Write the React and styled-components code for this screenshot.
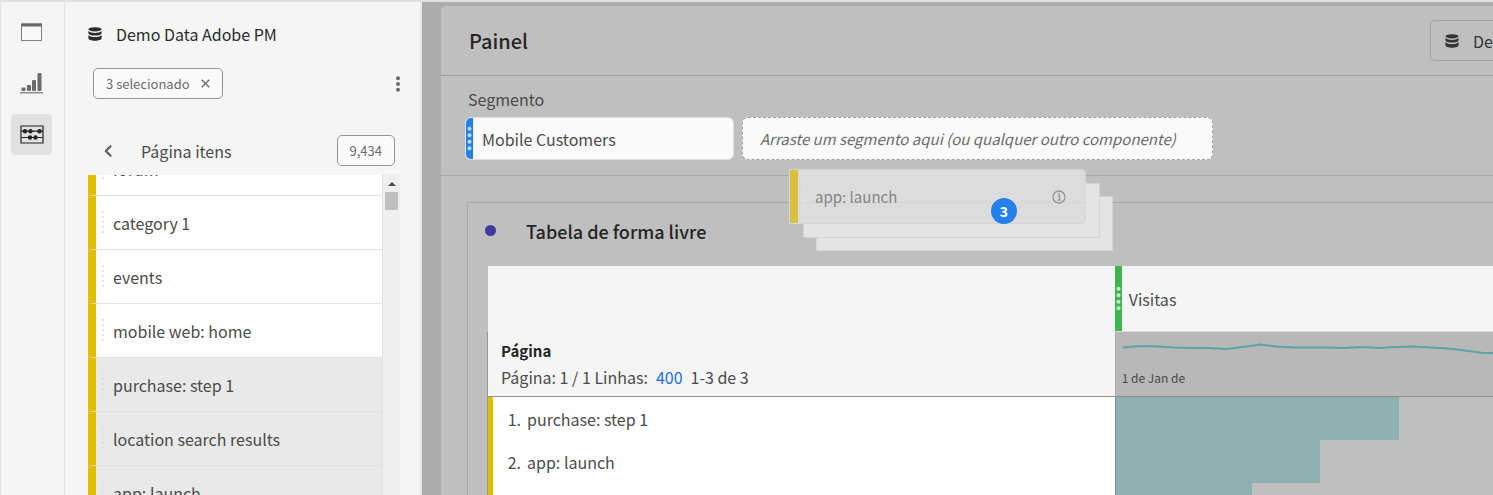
import React from "react";
import styled, { createGlobalStyle } from "styled-components";

const Global = createGlobalStyle`
  *, *::before, *::after { box-sizing: border-box; }
  body { margin: 0; background: #f5f5f5; }
  body, button, input, table {
    font-family: "Noto Sans CJK SC", "Liberation Sans", sans-serif;
    font-size: 16px;
    line-height: 24px;
    color: #4b4b4b;
  }
  button { padding: 0; border: 0; background: none; cursor: pointer; }
  svg { display: block; flex: none; }
`;

const Page = styled.div`
  display: flex;
  height: 100vh;
  overflow: hidden;
  border-top: 2px solid #e0e0e0;
  white-space: nowrap;
`;

const Rail = styled.nav`
  flex: none;
  width: 65px;
  padding: 10px 12px 10px 10px;
  display: flex;
  flex-direction: column;
  gap: 10px;
  border-left: 1px solid #e1e1e1;
  border-right: 1px solid #e1e1e1;
  background: #f5f5f5;
`;

const RailButton = styled.button`
  width: 41px;
  height: 41px;
  display: grid;
  place-items: center;
  border-radius: 4px;
  background: ${(p) => (p.$active ? "#e1e1e1" : "transparent")};
`;

const Sidebar = styled.aside`
  flex: none;
  width: 357px;
  padding: 20px 20px 0 23px;
  display: flex;
  flex-direction: column;
  border-right: 2px solid #e6e6e6;
  background: #f5f5f5;
`;

const Source = styled.div`
  display: flex;
  align-items: center;
  gap: 14px;
  color: #2c2c2c;
`;

const Filters = styled.div`
  display: flex;
  align-items: center;
  justify-content: space-between;
  margin-top: 22px;
  padding-left: 5px;
`;

const Outlined = styled.span`
  height: 31px;
  display: flex;
  align-items: center;
  gap: 11px;
  padding: 0 12px;
  border: 1px solid #959595;
  border-radius: 5px;
  background: #fafafa;
  color: #6b6b6b;
  font-size: 13px;
`;

const MenuButton = styled.button`
  width: 4px;
  height: 24px;
  display: grid;
  place-items: center;
`;

const Crumb = styled.div`
  display: flex;
  align-items: center;
  margin: 36px 5px 9px 14px;
`;

const BackButton = styled.button`
  width: 12px;
  height: 24px;
  display: grid;
  place-items: center;
  margin-right: 27px;
`;

const CrumbTitle = styled.span`
  flex: 1;
`;

const ListBox = styled.div`
  flex: 1;
  min-height: 0;
  display: flex;
  overflow: hidden;
`;

const List = styled.ul`
  flex: 1;
  margin: -33px 0 0;
  padding: 0;
  list-style: none;
  border-right: 1px solid #e1e1e1;
`;

const Item = styled.li`
  height: 54px;
  display: flex;
  align-items: center;
  border-left: 8px solid #e0bf00;
  border-bottom: 1px solid #e1e1e1;
  background: ${(p) => (p.$selected ? "#e9e9e9" : "#ffffff")};
`;

const Grip = styled.span`
  flex: none;
  width: 2px;
  height: 24px;
  margin: 0 9px 0 6px;
  background: repeating-linear-gradient(#e1e1e1 0 2px, transparent 2px 5px);
`;

const Scrollbar = styled.div`
  width: 17px;
  padding-top: 7px;
  display: flex;
  flex-direction: column;
  align-items: center;
  gap: 6px;
  background: #f0f0f0;
`;

const Thumb = styled.div`
  width: 13px;
  height: 18px;
  background: #c0c0c0;
`;

const Canvas = styled.main`
  flex: 1;
  min-width: 0;
  position: relative;
  padding: 4px 0 0 19px;
  background: #acacac;
`;

const Panel = styled.section`
  min-height: 100%;
  border-radius: 5px 0 0 0;
  background: #bfbfbf;
`;

const PanelHeader = styled.header`
  height: 70px;
  display: flex;
  align-items: center;
  justify-content: space-between;
  padding-left: 28px;
  border-bottom: 1px solid #9c9c9c;
`;

const PanelTitle = styled.h1`
  margin: 0;
  font-size: 20px;
  line-height: 28px;
  font-weight: 500;
  color: #252525;
`;

const SourceButton = styled.button`
  width: 63px;
  height: 41px;
  display: flex;
  align-items: center;
  gap: 14px;
  padding-left: 14px;
  border: 1px solid #a3a3a3;
  border-right: 0;
  border-radius: 5px 0 0 5px;
  color: #353535;
`;

const Segments = styled.div`
  height: 100px;
  padding: 11px 24px 0;
  border-bottom: 1px solid #a9a9a9;
`;

const SegmentLabel = styled.div`
  padding-left: 3px;
`;

const SegmentRow = styled.div`
  display: flex;
  gap: 8px;
  margin-top: 6px;
`;

const Segment = styled.div`
  width: 269px;
  height: 43px;
  display: flex;
  align-items: center;
  gap: 9px;
  overflow: hidden;
  border: 1px solid #dedede;
  border-radius: 6px;
  background: #fafafa;
`;

const Handle = styled.span`
  flex: none;
  width: 7px;
  height: ${(p) => p.$height}px;
  display: grid;
  place-items: center;
  background: ${(p) => p.$color};
`;

const DropZone = styled.div`
  width: 471px;
  height: 43px;
  display: flex;
  align-items: center;
  padding-left: 17px;
  border: 1px dashed #a0a0a0;
  border-radius: 6px;
  background: #fafafa;
  color: #6b6b6b;
  font-size: 15px;
  font-style: italic;
`;

const Freeform = styled.section`
  margin: 26px 0 0 26px;
  padding-left: 19px;
  border: 1px solid #a9a9a9;
  border-width: 1px 0 0 1px;
`;

const FreeformHeader = styled.div`
  height: 63px;
  display: flex;
  align-items: center;
  gap: 30px;
  padding-bottom: 8px;
`;

const Dot = styled.span`
  width: 11px;
  height: 11px;
  margin-left: -2px;
  border-radius: 50%;
  background: #3f3a9f;
`;

const FreeformTitle = styled.h2`
  margin: 0;
  font-size: 18px;
  line-height: 28px;
  font-weight: 500;
  color: #252525;
`;

const Table = styled.table`
  width: 100%;
  table-layout: fixed;
  border-collapse: separate;
  border-spacing: 0;
  th, td { padding: 0; text-align: left; font-weight: 400; vertical-align: top; }
`;

const NameColumn = styled.col`
  width: 62.4%;
`;

const EmptyCell = styled.td`
  height: 66px;
  border-left: 1px solid #bfbfbf;
  background: #f5f5f5;
`;

const MetricCell = styled.th`
  height: 66px;
  border-bottom: 1px solid #dddddd;
  background: #f5f5f5;
`;

const MetricContent = styled.div`
  display: flex;
  align-items: center;
  gap: 7px;
`;

const DimensionCell = styled.th`
  && { padding: 7px 0 0 13px; }
  height: 65px;
  border-left: 1px solid #999999;
  border-bottom: 1px solid #8f8f8f;
  background: #f5f5f5;
`;

const Dimension = styled.div`
  font-weight: 700;
  font-size: 15px;
  color: #252525;
`;

const Paging = styled.div`
  display: flex;
  gap: 8px;
  margin-top: 2px;
`;

const RowsLink = styled.a`
  color: #1a6fd8;
  text-decoration: none;
`;

const TrendCell = styled.td`
  height: 65px;
  overflow: hidden;
  border-left: 1px solid #a9a9a9;
  border-bottom: 1px solid #8f8f8f;
  background: #b8b8b8;
`;

const TrendLabel = styled.div`
  padding: 12px 0 0 6px;
  font-size: 12px;
  line-height: 20px;
`;

const RowName = styled.th`
  height: 43px;
  border-left: 1px solid #999999;
  background: #ffffff;
`;

const RowContent = styled.div`
  height: 43px;
  display: flex;
  align-items: center;
  gap: 6px;
  border-left: 5px solid #e0bf00;
`;

const RowNumber = styled.span`
  width: 28px;
  text-align: right;
`;

const BarCell = styled.td`
  height: 43px;
  border-left: 1px solid #808e8e;
`;

const Bar = styled.div`
  height: 43px;
  background: #8eb0b0;
`;

const Drag = styled.div`
  position: absolute;
  left: 368px;
  top: 168px;
  width: 323px;
  height: 82px;
`;

const Sheet = styled.div`
  position: absolute;
  left: ${(p) => p.$step * 13}px;
  top: ${(p) => p.$step * 13}px;
  width: 297px;
  height: 55px;
  border: 1px solid #d3d3d3;
  background: #e4e4e4;
`;

const DragCard = styled.div`
  position: absolute;
  inset: 0 auto auto 0;
  width: 295px;
  height: 53px;
  display: flex;
  align-items: center;
  padding-right: 19px;
  border-left: 8px solid #d8c03c;
  border-radius: 0 4px 4px 0;
  background: linear-gradient(transparent 5px, #d5d5d5 5px 6px, transparent 6px 32px, #d5d5d5 32px 33px, transparent 33px) #dcdcdc;
  box-shadow: 0 0 0 1px #d5d5d5;
  color: #858585;
  font-size: 15px;
`;

const DragName = styled.span`
  flex: 1;
`;

const Count = styled.span`
  position: absolute;
  left: 201px;
  top: 28px;
  width: 26px;
  height: 26px;
  border-radius: 50%;
  background: #2680eb;
  color: #ffffff;
  font-size: 14px;
  line-height: 26px;
  font-weight: 700;
  text-align: center;
`;

function DatabaseIcon() {
  return (
    <svg width="14" height="14" viewBox="0 0 14 14" fill="currentColor" aria-hidden="true">
      <ellipse cx="7" cy="2.3" rx="6.6" ry="2.1" />
      <path d="M.4 4.1C2 5.6 4.5 5.9 7 5.9s5-.3 6.6-1.8v2.1c0 1.4-3 2.3-6.6 2.3S.4 7.6.4 6.2z" />
      <path d="M.4 8.3C2 9.7 4.5 10 7 10s5-.3 6.6-1.7v3c0 1.5-3 2.5-6.6 2.5S.4 12.8.4 11.3z" />
    </svg>
  );
}

function WindowIcon() {
  return (
    <svg width="23" height="19" viewBox="0 0 23 19" aria-hidden="true">
      <rect x="1.5" y="1" width="20" height="16.5" fill="#f8f8f8" stroke="#808080" />
      <path d="M1 .5h21v3H1z" fill="#6b6b6b" />
    </svg>
  );
}

function ChartIcon() {
  return (
    <svg width="23" height="21" viewBox="0 0 23 21" fill="#6b6b6b" aria-hidden="true">
      <path d="M0 19h23v1.5H0z" fill="#8c8c8c" />
      <rect x="1.5" y="14.5" width="4" height="3.5" rx="1" />
      <rect x="7" y="12" width="4" height="6" rx="1" />
      <rect x="12" y="7" width="4" height="11" rx="1" />
      <rect x="17.5" y="0" width="4" height="18" rx="1" />
    </svg>
  );
}

function AbacusIcon() {
  return (
    <svg width="24" height="19" viewBox="0 0 24 19" fill="#252525" aria-hidden="true">
      <path d="M1 1h22v17H1zM1 6.2h22M1 12.5h22" fill="none" stroke="#252525" strokeWidth="1.2" />
      <circle cx="5" cy="6.2" r="2.2" />
      <circle cx="10.5" cy="6.2" r="2.2" />
      <circle cx="19.5" cy="6.2" r="2.2" />
      <circle cx="10" cy="12.5" r="2.2" />
      <circle cx="15.5" cy="12.5" r="2.2" />
    </svg>
  );
}

function CloseIcon() {
  return (
    <svg width="9" height="9" viewBox="0 0 9 9" aria-hidden="true">
      <path d="M.7.7l7.6 7.6M8.3.7L.7 8.3" stroke="#6b6b6b" strokeWidth="1.4" />
    </svg>
  );
}

function MoreIcon() {
  return (
    <svg width="4" height="16" viewBox="0 0 4 16" fill="#6b6b6b" aria-hidden="true">
      <circle cx="2" cy="2.2" r="2" />
      <circle cx="2" cy="8" r="2" />
      <circle cx="2" cy="13.8" r="2" />
    </svg>
  );
}

function ChevronLeft() {
  return (
    <svg width="8" height="12" viewBox="0 0 8 12" aria-hidden="true">
      <path d="M6.5 1.2L1.8 6l4.7 4.8" fill="none" stroke="#5e5e5e" strokeWidth="2.2" strokeLinecap="round" strokeLinejoin="round" />
    </svg>
  );
}

function HandleDots() {
  return (
    <svg width="5" height="25" viewBox="0 0 5 25" fill="#ffffff" fillOpacity=".7" aria-hidden="true">
      <circle cx="2.5" cy="2.8" r="2" />
      <circle cx="2.5" cy="9.3" r="2" />
      <circle cx="2.5" cy="15.7" r="2" />
      <circle cx="2.5" cy="22.2" r="2" />
    </svg>
  );
}

function InfoIcon() {
  return (
    <svg width="14" height="14" viewBox="0 0 14 14" aria-hidden="true">
      <circle cx="7" cy="7" r="6" fill="none" stroke="#949494" strokeWidth="1.3" />
      <circle cx="7" cy="4" r="1" fill="#949494" />
      <path d="M5.5 6.2h2v4M5.3 10.2h3.6" fill="none" stroke="#949494" strokeWidth="1.3" />
    </svg>
  );
}

function TrendLine() {
  return (
    <svg width="380" height="24" viewBox="0 0 380 24" aria-hidden="true">
      <path
        d="M7 15.5L24 14l18 .5 16 1 16 .5h18l18 1 17-2 17-2.5 17 2 17 1h34l16 .5 18-1 17 1 17-1 17-.5 17 1 18 1 17 2 18 2.5h20"
        fill="none"
        stroke="#5aa3a8"
        strokeWidth="2"
      />
    </svg>
  );
}

const items = [
  { name: "forum" },
  { name: "category 1" },
  { name: "events" },
  { name: "mobile web: home" },
  { name: "purchase: step 1", selected: true },
  { name: "location search results", selected: true },
  { name: "app: launch", selected: true },
];

const rows = [
  { number: "1.", name: "purchase: step 1", share: 75.2 },
  { number: "2.", name: "app: launch", share: 54.2 },
  { number: "", name: "", share: 36 },
];

export default function App() {
  return (
    <>
      <Global />
      <Page>
        <Rail>
          <RailButton type="button"><WindowIcon /></RailButton>
          <RailButton type="button"><ChartIcon /></RailButton>
          <RailButton type="button" $active><AbacusIcon /></RailButton>
        </Rail>

        <Sidebar>
          <Source><DatabaseIcon />Demo Data Adobe PM</Source>
          <Filters>
            <Outlined as="button" type="button">3 selecionado<CloseIcon /></Outlined>
            <MenuButton type="button"><MoreIcon /></MenuButton>
          </Filters>
          <Crumb>
            <BackButton type="button"><ChevronLeft /></BackButton>
            <CrumbTitle>Página itens</CrumbTitle>
            <Outlined>9,434</Outlined>
          </Crumb>
          <ListBox>
            <List>
              {items.map((item) => (
                <Item key={item.name} $selected={item.selected}>
                  <Grip />
                  {item.name}
                </Item>
              ))}
            </List>
            <Scrollbar>
              <svg width="8" height="4" viewBox="0 0 8 4" aria-hidden="true">
                <path d="M0 4l4-4 4 4z" fill="#4b4b4b" />
              </svg>
              <Thumb />
            </Scrollbar>
          </ListBox>
        </Sidebar>

        <Canvas>
          <Panel>
            <PanelHeader>
              <PanelTitle>Painel</PanelTitle>
              <SourceButton type="button"><DatabaseIcon />De</SourceButton>
            </PanelHeader>
            <Segments>
              <SegmentLabel>Segmento</SegmentLabel>
              <SegmentRow>
                <Segment>
                  <Handle $color="#2680eb" $height={43}><HandleDots /></Handle>
                  Mobile Customers
                </Segment>
                <DropZone>Arraste um segmento aqui (ou qualquer outro componente)</DropZone>
              </SegmentRow>
            </Segments>
            <Freeform>
              <FreeformHeader>
                <Dot />
                <FreeformTitle>Tabela de forma livre</FreeformTitle>
              </FreeformHeader>
              <Table>
                <colgroup>
                  <NameColumn />
                  <col />
                </colgroup>
                <thead>
                  <tr>
                    <EmptyCell />
                    <MetricCell scope="col">
                      <MetricContent>
                        <Handle $color="#3fb54f" $height={65}><HandleDots /></Handle>
                        Visitas
                      </MetricContent>
                    </MetricCell>
                  </tr>
                  <tr>
                    <DimensionCell scope="col">
                      <Dimension>Página</Dimension>
                      <Paging>
                        <span>Página: 1 / 1 Linhas:</span>
                        <RowsLink href="#linhas">400</RowsLink>
                        <span>1-3 de 3</span>
                      </Paging>
                    </DimensionCell>
                    <TrendCell>
                      <TrendLine />
                      <TrendLabel>1 de Jan de</TrendLabel>
                    </TrendCell>
                  </tr>
                </thead>
                <tbody>
                  {rows.map((row, index) => (
                    <tr key={index}>
                      <RowName scope="row">
                        <RowContent>
                          <RowNumber>{row.number}</RowNumber>
                          {row.name}
                        </RowContent>
                      </RowName>
                      <BarCell>
                        <Bar style={{ width: `${row.share}%` }} />
                      </BarCell>
                    </tr>
                  ))}
                </tbody>
              </Table>
            </Freeform>
          </Panel>

          <Drag>
            <Sheet $step={2} />
            <Sheet $step={1} />
            <DragCard>
              <Grip />
              <DragName>app: launch</DragName>
              <InfoIcon />
            </DragCard>
            <Count>3</Count>
          </Drag>
        </Canvas>
      </Page>
    </>
  );
}
